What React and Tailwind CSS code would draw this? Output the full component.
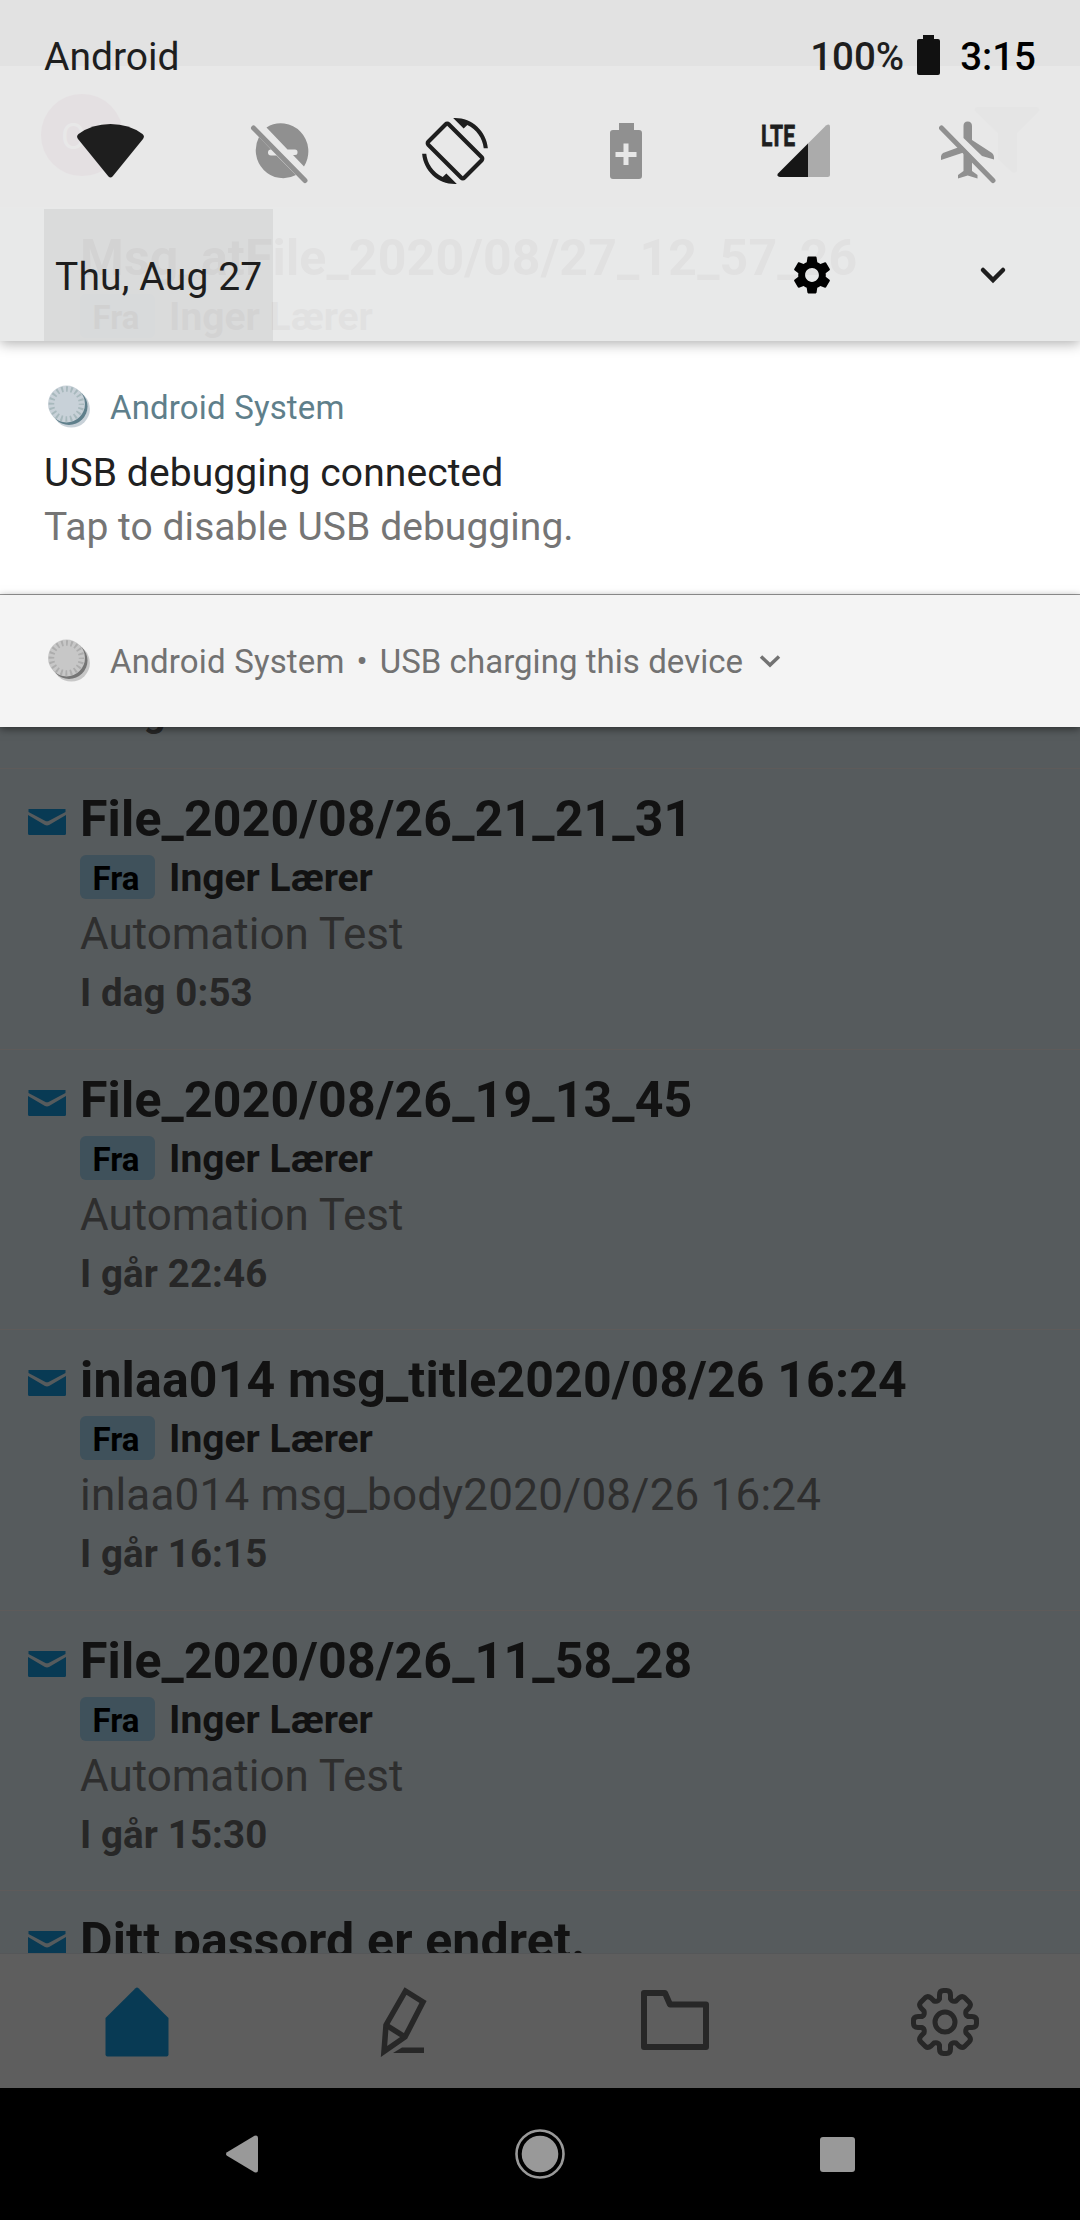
import React from "react";
import { MdScreenRotation, MdSettings } from "react-icons/md";

const messages = [
  { title: "Msg_atFile_2020/08/27_12_57_26", body: "", date: "", size: "h-[281px]", icon: false },
  { title: "", body: "", date: "I dag", size: "h-[280px]", icon: false },
  { title: "File_2020/08/26_21_21_31", body: "Automation Test", date: "I dag 0:53", size: "h-[281px]", icon: true },
  { title: "File_2020/08/26_19_13_45", body: "Automation Test", date: "I går 22:46", size: "h-[280px]", icon: true },
  { title: "inlaa014 msg_title2020/08/26 16:24", body: "inlaa014 msg_body2020/08/26 16:24", date: "I går 16:15", size: "h-[281px]", icon: true },
  { title: "File_2020/08/26_11_58_28", body: "Automation Test", date: "I går 15:30", size: "h-[280px]", icon: true },
];

function Envelope() {
  return (
    <svg className="mt-[40px] block h-[26px] w-[38px] shrink-0" viewBox="0 0 38 26" fill="#083a54">
      <path d="M0.5 0H37.5V3L21 11.8Q19 12.8 17 11.8L0.5 3Z" />
      <path d="M0 6L16.5 15.8Q19 17.2 21.5 15.8L38 6V24.5Q38 26 36.5 26H1.5Q0 26 0 24.5Z" />
    </svg>
  );
}

function MessageRow({ title, body, date, size, icon }) {
  const bodyTracking = body.length > 20 ? "tracking-[0.2px]" : "tracking-normal";
  return (
    <div className={"flex w-full shrink-0 border-t border-[#5e5b5a] pl-7 " + size}>
      <div className="w-[52px] shrink-0">{icon && <Envelope />}</div>
      <div className="flex flex-col">
        <div className="mt-[21px] h-[58px] text-[50px] leading-[58px] font-bold tracking-[0.16px] text-[#121212]">{title}</div>
        {title !== "" ? (
          <div className="mt-[7px] flex h-11 items-center gap-[14px]">
            <span className="flex h-11 w-[75px] items-center rounded-[6px] bg-[#3f515b] pt-[2px] pl-[12.5px] text-[33px] leading-none font-bold text-black">
              Fra
            </span>
            <span className="pt-[2px] text-[39px] leading-[44px] font-bold text-[#121212]">Inger Lærer</span>
          </div>
        ) : (
          <div className="mt-[7px] h-11" />
        )}
        <div className={"mt-[9px] h-[52px] text-[44px] leading-[52px] text-[#2e2e2e] " + bodyTracking}>{body}</div>
        <div className="mt-[10px] h-[45px] text-[38.5px] leading-[45px] font-bold tracking-[0.1px] text-[#272727]">{date}</div>
      </div>
    </div>
  );
}

function TabBar() {
  return (
    <div className="grid h-[135px] w-full shrink-0 grid-cols-4 border-t border-[#555759] bg-[#5e5e5e]">
      <div className="flex items-start justify-center pt-[33px] pl-[3px]">
        <svg className="h-[70px] w-[64px]" viewBox="0 0 64 70" fill="#083a54">
          <path d="M30.5 1.2Q32 0 33.5 1.2L63.500 31V67.5Q63.500 69.5 61.500 69.5H2.5Q0.5 69.5 0.5 67.5V31Z" />
        </svg>
      </div>
      <div className="flex items-start justify-center pt-[33px]">
        <svg className="h-[70px] w-[50px]" viewBox="0 0 50 70" fill="none" stroke="#272727" strokeWidth="5.5">
          <path d="M25.5 4L43 15L25 50L4 64.5L6 38Z" />
          <path d="M6 38L25 50" />
          <path d="M22 60.5H44V66H13Z" fill="#272727" stroke="none" />
        </svg>
      </div>
      <div className="flex items-start justify-center pt-9">
        <svg className="h-[60px] w-[68px]" viewBox="0 0 68 60" fill="none" stroke="#272727" strokeWidth="6" strokeLinejoin="round">
          <path d="M3 3H24L29 14.5H65V57H3Z" />
        </svg>
      </div>
      <div className="flex items-start justify-center pt-[33px]">
        <svg className="h-[70px] w-[70px]" viewBox="-35 -35 70 70" fill="none" stroke="#272727" strokeWidth="5" strokeLinejoin="round">
          <path d="M-5.5 -27Q-5.5 -31.500 -1.500 -31.500H1.500Q5.500 -31.500 5.500 -27V-23Q7 -20 11 -21L14 -24Q17 -26.500 19.500 -24.500L24.500 -19.500Q26.500 -17 24 -14L21 -11Q20 -7 23 -5.500H27Q31.500 -5.500 31.500 -1.500V1.500Q31.500 5.500 27 5.500H23Q20 7 21 11L24 14Q26.500 17 24.500 19.500L19.500 24.500Q17 26.500 14 24L11 21Q7 20 5.500 23V27Q5.500 31.500 1.500 31.500H-1.500Q-5.500 31.500 -5.500 27V23Q-7 20 -11 21L-14 24Q-17 26.500 -19.500 24.500L-24.500 19.500Q-26.500 17 -24 14L-21 11Q-20 7 -23 5.500H-27Q-31.500 5.500 -31.500 1.500V-1.500Q-31.500 -5.500 -27 -5.500H-23Q-20 -7 -21 -11L-24 -14Q-26.500 -17 -24.500 -19.500L-19.500 -24.500Q-17 -26.500 -14 -24L-11 -21Q-7 -20 -5.500 -23Z" />
          <circle r="10" />
        </svg>
      </div>
    </div>
  );
}

function NavBar() {
  return (
    <div className="flex h-[132px] w-full shrink-0 items-center justify-between bg-black px-[225px]">
      <svg className="h-[38px] w-[34px]" viewBox="0 0 34 38" fill="#999">
        <path d="M2 17.200L29.500 0.800Q33 -0.500 33 3V35Q33 38.500 29.500 37.200L2 20.800Q0 19 2 17.200Z" />
      </svg>
      <svg className="h-[50px] w-[50px]" viewBox="0 0 50 50">
        <circle cx="25" cy="25" r="23.500" fill="none" stroke="#999" strokeWidth="2.600" />
        <circle cx="25" cy="25" r="18.300" fill="#999" />
      </svg>
      <div className="h-[35px] w-[35px] rounded-[3px] bg-[#999]" />
    </div>
  );
}

function AppScreen() {
  return (
    <div className="flex h-[2220px] w-full flex-col bg-[#565b5d]">
      <div className="h-[66px] shrink-0 bg-[#202020]" />
      <div className="flex h-[141px] shrink-0 items-start justify-between bg-[#505050] pr-10 pl-[41px]">
        <div className="mt-7 flex h-[82px] w-[82px] items-center rounded-full bg-[#340a20] pt-[3px] pl-[20px] text-[36px] text-[#585858]">
          OJ
        </div>
        <svg className="mt-[41px] h-[66px] w-[66px]" viewBox="0 0 66 66" fill="#3a3a3a">
          <path d="M3 0H63Q67 2 64 5L43 26V64Q40 67 37 64L24 52V26L2 5Q-1 2 3 0Z" />
        </svg>
      </div>
      <div className="flex h-[1746px] shrink-0 flex-col overflow-hidden">
        {messages.map((m, i) => (
          <MessageRow key={i} {...m} />
        ))}
        <MessageRow title="Ditt passord er endret." body="" date="" size="h-[281px]" icon />
      </div>
      <TabBar />
      <NavBar />
    </div>
  );
}

function SystemDot({ face, edge, tick, rim }) {
  return (
    <svg className="h-[44px] w-[44px]" viewBox="0 0 44 44">
      <circle cx="23.300" cy="24" r="18.600" fill={rim} />
      <circle cx="21" cy="21.500" r="18.500" fill={edge} />
      <circle cx="18.500" cy="19" r="18.500" fill={face} />
      <circle cx="18.500" cy="19" r="15" fill="none" stroke={tick} strokeWidth="5.500" strokeDasharray="1.900 2.812" strokeDashoffset="0.950" />
    </svg>
  );
}

function QuickTiles() {
  return (
    <div className="flex h-[98px] shrink-0 items-start justify-between pr-[79px] pl-[77px]">
      <svg className="mt-[14px] h-[54px] w-[67px]" viewBox="0 0 67 54" fill="#1e1e1e">
        <path d="M1 15Q-1 12 1.500 10Q15 0 33.500 0T65.500 10Q68 12 66 15L35.500 52.500Q33.500 54.500 31.500 52.500Z" />
      </svg>
      <svg className="mt-[8px] h-[66px] w-[66px]" viewBox="0 0 66 66" fill="#909090">
        <path fillRule="evenodd" d="M16.500 9.500A27.500 28 0 0 1 54 48.500L43 37H45Q47.500 37 47.500 34.500V34Q47.500 31.500 45 31.500H37.500ZM9 19L21 31.500Q18 31.500 18 34.500T21 37.500H26.500L46 57A27.500 28 0 0 1 9 19Z" />
        <path d="M3.500 10L55 62.500" stroke="#909090" strokeWidth="5" strokeLinecap="round" />
      </svg>
      <MdScreenRotation className="mt-[8px] h-[66px] w-[66px] text-[#1e1e1e]" />
      <svg className="mt-[13px] h-[56px] w-[66px]" viewBox="0 0 66 56">
        <path d="M26 0H41V7H46Q49 7 49 10V53Q49 56 46 56H20Q17 56 17 53V10Q17 7 20 7H26Z" fill="#909090" />
        <path d="M33 20.500V42M22.500 31.500H43.500" stroke="#e7e7e7" strokeWidth="5" />
      </svg>
      <div className="mt-[14px] mr-[3px] -ml-[3px] flex h-[56px] w-[68px] items-start">
        <svg className="h-[56px] w-[68px] overflow-visible" viewBox="0 0 68 56">
          <text x="-1" y="22" textLength="34" lengthAdjust="spacingAndGlyphs" fill="#1e1e1e" stroke="#1e1e1e" strokeWidth="0.800" fontFamily="Roboto" fontWeight="700" fontSize="30">LTE</text>
          <path d="M46 19.500L64 1.500Q68 -1 68 3V50.500Q68 53 65.500 53H46Z" fill="#ababab" />
          <path d="M46 19.500V53H18Q14 52 16 49.500Z" fill="#161616" />
        </svg>
      </div>
      <svg className="mt-[8px] h-[66px] w-[62px]" viewBox="0 0 62 66" fill="#909090">
        <path d="M24.500 8Q24.500 3.500 28.700 3.500T33 8V22L53 35Q55.500 37 55 41.500L43 38L24.500 20ZM23 28L33 38.500V53L38.500 57V60.500L28.700 57.500L19 60.500V57L24.500 53V34.500L2 42V38.500Q2 36.500 4 35Z" />
        <path d="M2.500 10L54 62.500" stroke="#909090" strokeWidth="5" strokeLinecap="round" />
      </svg>
    </div>
  );
}

function NotificationShade() {
  return (
    <div className="absolute inset-x-0 top-0 flex flex-col">
      <div className="relative z-10 flex h-[341px] flex-col bg-[#fafafa]/89 shadow-[0_3px_12px_rgba(0,0,0,0.3)]">
        <div className="flex h-[110px] shrink-0 items-start justify-between pr-11 pl-11 text-[39px] leading-[46px] text-[#1e1e1e]">
          <div className="mt-[34px]">Android</div>
          <div className="mt-[34px] flex">
            <span className="text-[38.5px] font-medium">100%</span>
            <svg className="mt-px ml-[13px] h-10 w-[23px]" viewBox="0 0 23 40" fill="#111">
              <path d="M6 0H17V4H21Q23 4 23 6V38Q23 40 21 40H2Q0 40 0 38V6Q0 4 2 4H6Z" />
            </svg>
            <span className="ml-[20px] text-[38.5px] font-medium text-black">3:15</span>
          </div>
        </div>
        <QuickTiles />
        <div className="flex h-[133px] items-center px-11 pt-px">
          <div className="flex h-[132px] w-[229px] items-center bg-black/6 pt-[5px] pl-[11px] text-[39px] tracking-[0.15px] whitespace-nowrap text-[#1e1e1e]">
            <span>Thu, Aug 27</span>
          </div>
          <MdSettings className="ml-[516px] h-[46px] w-[46px] text-black" />
          <svg className="ml-[144px] h-[18px] w-[28px]" viewBox="0 0 28 18" fill="none" stroke="#1e1e1e" strokeWidth="4.500" strokeLinecap="round">
            <path d="M4 4L14 14L24 4" />
          </svg>
        </div>
      </div>
      <div className="flex h-[254px] flex-col border-b border-[#9e9e9e] bg-white px-11">
        <div className="mt-[43px] flex h-[45px] items-center pl-1">
          <SystemDot face="#c8d1d8" edge="#5f7f8b" tick="#a8b9bd" rim="#c8d1d8" />
          <span className="ml-[18px] pt-[2px] text-[33px] tracking-[0.16px] text-[#5f7f8b]">Android System</span>
        </div>
        <div className="mt-[22px] h-[45px] text-[39px] leading-[45px] tracking-[0.1px] text-[#212121]">USB debugging connected</div>
        <div className="mt-[9px] h-[45px] text-[39px] leading-[45px] tracking-[0.05px] text-[#757575]">Tap to disable USB debugging.</div>
      </div>
      <div className="flex h-[132px] items-center bg-[#f4f4f4] pl-12 text-[33px] text-[#727272] shadow-[0_2px_8px_rgba(0,0,0,0.5)]">
        <SystemDot face="#c7c7c7" edge="#757575" tick="#adadad" rim="#c7c7c7" />
        <span className="ml-[18px] pt-[2px] tracking-[0.16px]">Android System</span>
        <span className="ml-[12px] pt-[2px]">•</span>
        <span className="ml-[12px] pt-[2px] tracking-[0.04px]">USB charging this device</span>
        <svg className="ml-[16px] h-[14px] w-[22px]" viewBox="0 0 22 14" fill="none" stroke="#727272" strokeWidth="3.500">
          <path d="M2 2.500L11 11L20 2.500" />
        </svg>
      </div>
    </div>
  );
}

export default function App() {
  return (
    <div className="relative h-[2220px] w-[1080px] overflow-hidden font-['Roboto',sans-serif]">
      <AppScreen />
      <NotificationShade />
    </div>
  );
}
